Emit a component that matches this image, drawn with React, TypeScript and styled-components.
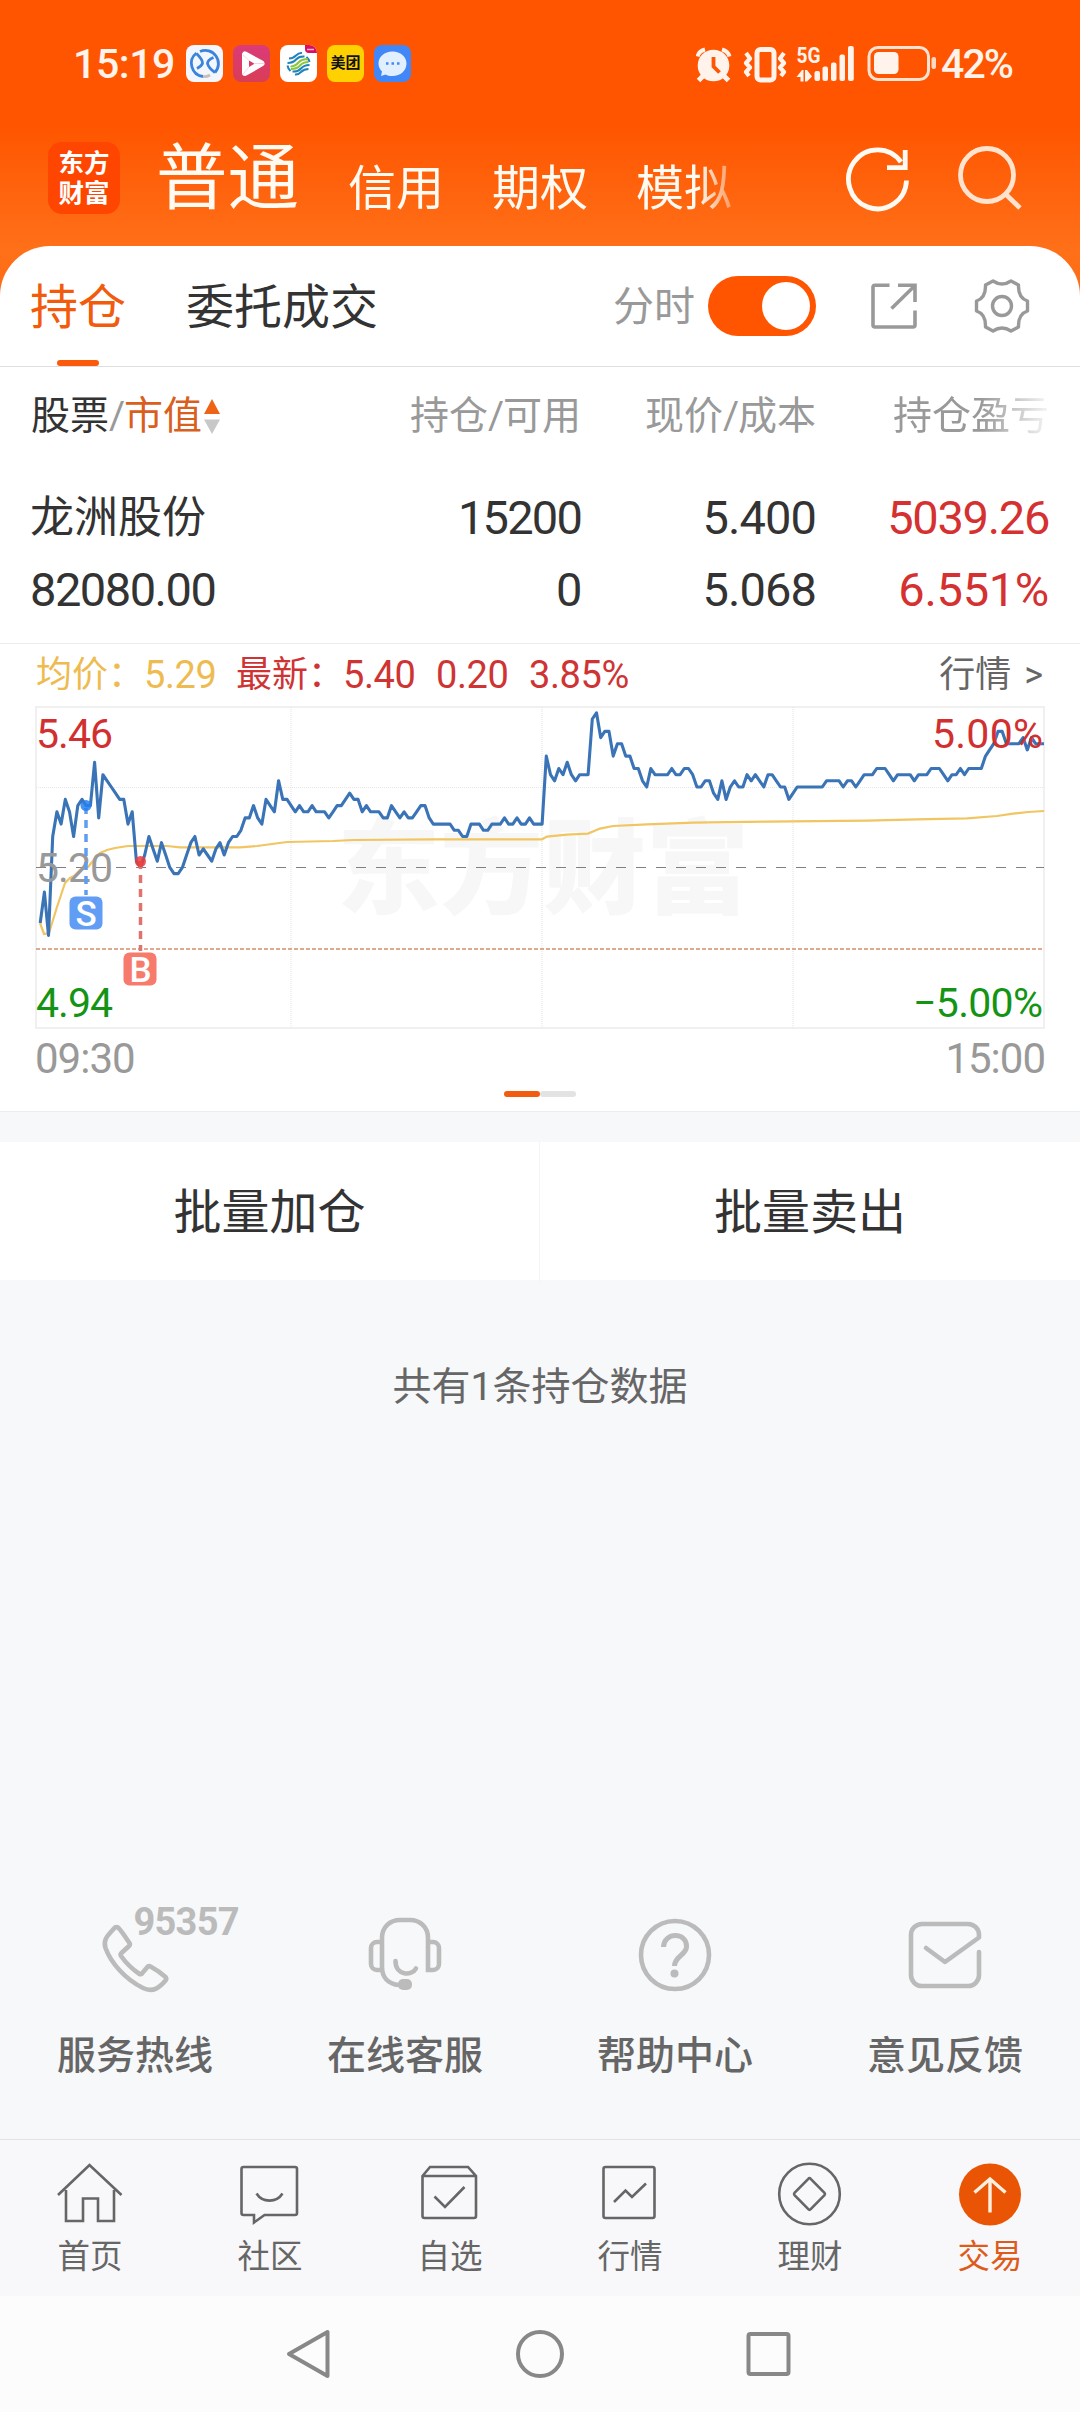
import React from 'react';
import styled, { createGlobalStyle } from 'styled-components';

const Global = createGlobalStyle`
  * { box-sizing: border-box; }
  body { margin: 0; background: #f7f8fa; }
  svg { display: block; flex: none; }
`;

const FONT = `Roboto, 'Noto Sans CJK SC', sans-serif`;

const Screen = styled.div`
  width: 1080px;
  height: 2412px;
  display: flex;
  flex-direction: column;
  overflow: hidden;
  font-family: ${FONT};
  color: #333;
  white-space: nowrap;
  background: linear-gradient(180deg, #ff5500 0, #ff5500 125px, #ff7019 250px, #ff6a14 310px, #f7f8fa 310px);
`;

/* ---------- status bar ---------- */

const StatusBar = styled.div`
  height: 127px;
  padding: 0 67px 0 73px;
  display: flex;
  align-items: center;
  color: #fff3ec;
`;

const Clock = styled.span`
  width: 113px;
  font-size: 41px;
  font-weight: 500;
  line-height: 48px;
  letter-spacing: -0.4px;
`;

const AppIcons = styled.div`
  display: flex;
  gap: 10px;
`;

const AppTile = styled.div<{ $bg: string }>`
  width: 37px;
  height: 37px;
  border-radius: 8px;
  overflow: hidden;
  display: flex;
  align-items: center;
  justify-content: center;
  background: ${(p) => p.$bg};
  color: #111;
  font-size: 15px;
  font-weight: 700;
  line-height: 37px;
`;

const StatusRight = styled.div`
  margin-left: auto;
  display: flex;
  align-items: center;
`;

const Percent = styled.span`
  margin-left: 5px;
  width: 72px;
  font-size: 41px;
  font-weight: 500;
  line-height: 48px;
  letter-spacing: -1.9px;
`;

/* ---------- app header ---------- */

const AppHeader = styled.header`
  height: 119px;
  padding: 0 54px 0 48px;
  display: flex;
  align-items: flex-start;
`;

const Logo = styled.div`
  width: 72px;
  height: 72px;
  margin-top: 15px;
  padding-top: 6px;
  border-radius: 14px;
  background: #ff4600;
  color: #fff;
  font-weight: 700;
  font-size: 25.5px;
  line-height: 30px;
  text-align: center;
`;

const Accounts = styled.nav`
  width: 680px;
  height: 119px;
  margin-left: 36px;
  display: flex;
  align-items: flex-start;
  gap: 48px;
  color: #fffaf2;
  mask-image: linear-gradient(90deg, #000 542px, rgba(0, 0, 0, 0.15) 587px);
`;

const Account = styled.span<{ $active?: boolean }>`
  padding-top: ${(p) => (p.$active ? 10 : 20)}px;
  font-size: ${(p) => (p.$active ? 71.5 : 48)}px;
  line-height: 84px;
  margin-right: ${(p) => (p.$active ? 1 : 0)}px;
`;

const HeaderIcons = styled.div`
  margin-left: auto;
  margin-top: 16px;
  display: flex;
  gap: 42px;
`;

/* ---------- panel ---------- */

const Panel = styled.section`
  height: 866px;
  border-radius: 50px 50px 0 0;
  border-bottom: 1px solid #ebedef;
  background: #fff;
`;

const TabBar = styled.div`
  height: 121px;
  padding: 0 50px 0 30px;
  border-bottom: 1px solid #dedede;
  display: flex;
  align-items: center;
`;

const Tab = styled.div<{ $active?: boolean }>`
  position: relative;
  height: 120px;
  margin-right: 60px;
  font-size: 48px;
  line-height: 123px;
  color: ${(p) => (p.$active ? '#f25a0c' : '#333')};
  &::after {
    content: '';
    display: ${(p) => (p.$active ? 'block' : 'none')};
    position: absolute;
    left: 27px;
    bottom: 0;
    width: 42px;
    height: 6px;
    border-radius: 3px;
    background: #fa5a0a;
  }
`;

const SwitchLabel = styled.span`
  margin-left: auto;
  margin-right: 13px;
  padding-top: 2px;
  font-size: 41px;
  line-height: 60px;
  color: #999;
`;

const Switch = styled.div`
  width: 108px;
  height: 60px;
  padding: 6px;
  border-radius: 30px;
  background: #ff5500;
  display: flex;
  justify-content: flex-end;
`;

const Knob = styled.div`
  width: 48px;
  height: 48px;
  border-radius: 50%;
  background: #fff;
`;

const TabIcons = styled.div`
  margin-left: 53px;
  display: flex;
  align-items: center;
  gap: 55px;
`;

const Columns = styled.div`
  display: grid;
  grid-template-columns: 350px 200px 235px 233px;
  padding: 0 31px;
`;

const ColumnHead = styled(Columns)`
  height: 96px;
  padding-top: 2px;
  align-items: center;
  font-size: 39px;
  line-height: 60px;
  color: #999;
`;

const HeadCell = styled.div<{ $faded?: boolean }>`
  display: flex;
  align-items: center;
  justify-content: flex-end;
  mask-image: ${(p) => (p.$faded ? 'linear-gradient(90deg, #000 165px, transparent 240px)' : 'none')};
`;

const SortCell = styled.div`
  display: flex;
  align-items: center;
`;

const Word = styled.span<{ $color: string }>`
  color: ${(p) => p.$color};
`;

const Slash = styled.span`
  width: 15px;
  text-align: center;
`;

const SortArrows = styled.svg`
  margin-left: 1px;
  margin-top: 1px;
`;

const Holding = styled(Columns)`
  height: 181px;
  padding-top: 18px;
  grid-auto-rows: 72px;
  border-bottom: 1px solid #ededed;
`;

const StockName = styled.div`
  margin-left: -1px;
  font-size: 44px;
  line-height: 75px;
`;

const Figure = styled.div<{ $left?: boolean; $red?: boolean; $tracking?: number }>`
  font-size: 47px;
  line-height: 74px;
  letter-spacing: ${(p) => p.$tracking ?? -1.5}px;
  margin-left: ${(p) => (p.$left ? -1 : 0)}px;
  text-align: ${(p) => (p.$left ? 'left' : 'right')};
  color: ${(p) => (p.$red ? '#d53131' : '#333')};
`;

const QuoteLine = styled.div`
  height: 61px;
  padding: 0 37px 0 36px;
  display: flex;
  align-items: center;
  font-size: 36px;
  line-height: 60px;
`;

const QuoteText = styled.span<{ $w: number; $color: string }>`
  width: ${(p) => p.$w}px;
  padding-top: 1px;
  color: ${(p) => p.$color};
`;

const QuoteNum = styled(QuoteText)`
  font-size: 38px;
  letter-spacing: -0.4px;
`;

const More = styled.span`
  margin-left: auto;
  padding-top: 1px;
  word-spacing: 4px;
  color: #666;
`;

const TimeAxis = styled.div`
  height: 46px;
  padding: 0 35px;
  display: flex;
  justify-content: space-between;
  font-size: 42px;
  line-height: 48px;
  letter-spacing: -1px;
  color: #999;
`;

const Pager = styled.div`
  margin-top: 10px;
  display: flex;
  justify-content: center;
`;

const PageMark = styled.div<{ $on?: boolean }>`
  width: 36px;
  height: 6px;
  border-radius: 3px;
  background: ${(p) => (p.$on ? '#f25c11' : '#e3e3e3')};
`;

/* ---------- batch actions ---------- */

const Actions = styled.div`
  height: 138px;
  margin-top: 30px;
  display: grid;
  grid-template-columns: 539px 541px;
  background: #fff;
`;

const Action = styled.div`
  text-align: center;
  font-size: 48px;
  line-height: 141px;
  & + & {
    border-left: 1px solid #f4f4f6;
  }
`;

const Summary = styled.div`
  margin-top: 76px;
  text-align: center;
  font-size: 39px;
  line-height: 62px;
  color: #666;
`;

/* ---------- services ---------- */

const Services = styled.div`
  margin-top: auto;
  height: 243px;
  display: grid;
  grid-template-columns: repeat(4, 1fr);
`;

const Service = styled.div`
  display: flex;
  flex-direction: column;
  align-items: center;
  font-size: 39px;
  font-weight: 500;
  line-height: 60px;
  color: #666;
`;

const ServiceArt = styled.svg`
  margin-bottom: 26px;
`;

/* ---------- bottom navigation ---------- */

const BottomNav = styled.nav`
  height: 157px;
  border-top: 1px solid #e2e3e5;
  background: #f8f8fa;
  display: grid;
  grid-template-columns: repeat(6, 1fr);
`;

const NavItem = styled.div<{ $active?: boolean }>`
  padding-top: 19px;
  display: flex;
  flex-direction: column;
  align-items: center;
  font-size: 32.5px;
  line-height: 40px;
  color: ${(p) => (p.$active ? '#dd5c1c' : '#666')};
`;

const NavArt = styled.svg`
  margin-bottom: 8px;
`;

const SystemBar = styled.div`
  height: 116px;
  background: #fcfcfc;
  display: flex;
  align-items: center;
  justify-content: center;
  gap: 180px;
`;

/* ---------- chart ---------- */

// Minute prices in cents for the whole session.
const PRICES = [
  511, 516, 509, 525, 529, 527, 531, 529, 525, 530, 531, 530, 530, 537, 528, 535, 534, 533, 532, 531,
  531, 527, 529, 521, 520, 522, 525, 523, 521, 524, 522, 520, 519, 519, 520, 522, 524, 525, 522, 523,
  522, 521, 523, 524, 522, 524, 525, 525, 526, 528, 528, 530, 528, 527, 531, 530, 529, 534, 531, 531,
  530, 529, 530, 529, 529, 530, 529, 529, 529, 528, 529, 530, 530, 531, 532, 531, 531, 529, 530, 529,
  529, 529, 528, 528, 530, 529, 528, 529, 528, 528, 529, 530, 530, 528, 527, 527, 527, 527, 527, 526,
  526, 525, 525, 527, 527, 527, 526, 526, 527, 527, 527, 528, 527, 527, 528, 527, 527, 528, 527, 527,
  527, 538, 535, 534, 536, 535, 537, 535, 534, 535, 535, 535, 544, 545, 541, 542, 542, 538, 540, 540,
  538, 538, 536, 536, 534, 533, 536, 535, 535, 535, 535, 536, 535, 535, 536, 536, 535, 533, 533, 534,
  534, 532, 531, 534, 531, 533, 534, 533, 533, 535, 534, 535, 534, 533, 535, 535, 534, 533, 533, 531,
  532, 533, 533, 533, 533, 533, 533, 533, 534, 534, 534, 534, 533, 534, 534, 533, 534, 535, 535, 535,
  536, 536, 536, 535, 534, 535, 535, 535, 535, 534, 535, 535, 535, 536, 536, 536, 535, 534, 535, 535,
  536, 535, 536, 536, 536, 536, 538, 539, 540, 542, 542, 540, 540, 540, 540, 541, 539, 541, 540, 540,
  540,
];

const pricePath = PRICES.map(
  (p, i) => `${i ? 'L' : 'M'}${(36 + (i + 1) * 4.1826).toFixed(1)} ${(867.4 - (p - 520) * 6.183).toFixed(1)}`,
).join('');

const AVG_PATH =
  'M40 923L44 934L49 933L53 920L57 907L61 895L65 883L70 878L74 876L80 870L88 867L93 861L100 853L107 850L115 848L128 846L167 846L180 847.3L240 847.3L257 846L287 842L333 841L353 840L433 839.4L542 839.3L547 836.6L567 834.6L588 833.6L600 828.6L613 826L647 824.4L693 822.7L767 821.6L867 820.6L917 819.4L967 818.3L997 816L1013 813.6L1028 812L1044 811';

function ChartLabel(p: { x: number; y: number; w: number; fill: string; end?: boolean; children: string }) {
  return (
    <text
      x={p.x}
      y={p.y}
      fill={p.fill}
      fontSize="41"
      textLength={p.w}
      textAnchor={p.end ? 'end' : 'start'}
    >
      {p.children}
    </text>
  );
}

function Chart() {
  return (
    <svg width="1080" height="330" viewBox="0 705 1080 330" fontFamily={FONT}>
      <text x="543" y="906" fontSize="103" fontWeight="900" textAnchor="middle" fill="#f7f7f7" fontFamily="'Noto Sans CJK SC', sans-serif">
        东方财富
      </text>
      <rect x="36" y="707" width="1008" height="321" fill="none" stroke="#f0f0f0" strokeWidth="2" />
      <path d="M291 707V1028M542 707V1028M793 707V1028M36 787.5H1044" stroke="#e6e6e6" strokeWidth="1.2" strokeDasharray="1 1" />
      <path d="M36 867.5H1044" stroke="#808080" strokeWidth="1.2" strokeDasharray="10 10" />
      <path d="M36 949H1044" stroke="#dda98f" strokeWidth="2" strokeDasharray="4 2" />
      <path d={AVG_PATH} fill="none" stroke="#f0c562" strokeWidth="2.2" />
      <path d={pricePath} fill="none" stroke="#3a74b6" strokeWidth="3.1" strokeLinejoin="round" />
      <ChartLabel x={36} y={748} w={77} fill="#d23030">5.46</ChartLabel>
      <ChartLabel x={36} y={881.5} w={77} fill="#999">5.20</ChartLabel>
      <ChartLabel x={36} y={1017} w={77} fill="#149414">4.94</ChartLabel>
      <ChartLabel x={1043} y={748} w={111} fill="#d23030" end>5.00%</ChartLabel>
      <ChartLabel x={1043} y={1017} w={130} fill="#149414" end>−5.00%</ChartLabel>
      <path d="M86 808V895" stroke="#5f9df0" strokeWidth="3.5" strokeDasharray="8 6" strokeDashoffset="2" />
      <circle cx="86" cy="805.5" r="5.5" fill="#2680ee" opacity=".85" />
      <rect x="69.5" y="896.5" width="33" height="33" rx="6" fill="#629df5" />
      <text x="86" y="925.5" fontSize="35" fontWeight="500" textAnchor="middle" fill="#fff">S</text>
      <path d="M140.5 861V951" stroke="#e0746c" strokeWidth="3.5" strokeDasharray="8 6" />
      <circle cx="140.5" cy="861.5" r="5.5" fill="#ee3b3b" opacity=".85" />
      <rect x="123.5" y="952.5" width="33" height="33" rx="6" fill="#f77b6c" />
      <text x="140.5" y="981.5" fontSize="35" fontWeight="500" textAnchor="middle" fill="#fff">B</text>
    </svg>
  );
}

/* ---------- status glyphs ---------- */

function StatusGlyphs() {
  return (
    <svg width="240" height="40" viewBox="695 43 240 40" fill="#fff3ec">
      <circle cx="712.500" cy="64.500" r="15.800" />
      <path d="M696.500 55.500Q698 50 704 48.500M721 48.500Q727 50 728.500 55.500" fill="none" stroke="#fff3ec" strokeWidth="4" />
      <path d="M702 75l-4.500 4.500M723 75l4.500 4.500" stroke="#fff3ec" strokeWidth="5" />
      <path d="M712.500 56v9.500l6 6" fill="none" stroke="#ff5500" strokeWidth="3.800" />
      <rect x="756" y="48.500" width="17" height="30.500" rx="3.500" fill="none" stroke="#fff3ec" strokeWidth="5" />
      <path d="M745 52l4 5.500-4 4.500 4 4.500-4 4.500 3 4M783 52l-4 5.500 4 4.500-4 4.500 4 4.500-3 4" fill="none" stroke="#fff3ec" strokeWidth="4.200" strokeLinejoin="round" />
      <text x="795.500" y="62" fontSize="22.500" fontWeight="700" fontFamily={FONT} textLength="24" lengthAdjust="spacingAndGlyphs">5G</text>
      <path d="M795.500 76l5.500-7h1.500v11.500h-3v-4.500zM804 69h2l5 6.500-5 5h-2z" />
      <rect x="813.500" y="70" width="5.500" height="10" rx="2" />
      <rect x="821.500" y="65.500" width="5.500" height="14.500" rx="2" />
      <rect x="830" y="61.500" width="5.500" height="18.500" rx="2" />
      <rect x="838.500" y="53.500" width="5.500" height="26.500" rx="2" />
      <rect x="847" y="45" width="5.800" height="35" rx="2" />
      <rect x="868" y="46.500" width="59.500" height="32" rx="9" fill="none" stroke="#ffe3d2" strokeWidth="3" />
      <rect x="873" y="51" width="24.500" height="22" rx="4.500" />
      <rect x="930.500" y="56" width="4.500" height="12" rx="2" fill="#ffd9c2" />
    </svg>
  );
}

function Status() {
  return (
    <StatusBar>
      <Clock>15:19</Clock>
      <AppIcons>
        <AppTile $bg="#f3f6fc">
          <svg width="37" height="37" viewBox="0 0 37 37" fill="none" stroke="#3b84dc" strokeWidth="2.800">
            <path d="M14 6.500A13.200 13.200 0 0 1 29 27.500" />
            <path d="M10.500 8A13.200 13.200 0 0 0 17 31.500" />
            <path d="M17 31.500Q21 32 24 30" stroke="#c9bfb8" />
            <path d="M10.500 8.500Q17 15 16.500 18.500Q15.500 21 11 23.500" />
            <path d="M27.500 12.500Q21.500 15 21.500 18.500Q22.500 23 29 27.500" />
          </svg>
        </AppTile>
        <AppTile $bg="linear-gradient(180deg, #db3b78, #d93d56)">
          <svg width="37" height="37" viewBox="0 0 37 37">
            <path d="M12 9.500v18.500L28.500 18.500z" fill="#fff" stroke="#fff" strokeWidth="6" strokeLinejoin="round" />
            <path d="M16 15.500v6.500l5.500-3.300z" fill="#d93c64" />
            <path d="M10 10L16 15.500M10 29L16 22M31 18.500H21.500" stroke="#f8d3df" strokeWidth="1" />
          </svg>
        </AppTile>
        <AppTile $bg="#fff">
          <svg width="37" height="37" viewBox="0 0 37 37" fill="none" strokeWidth="2">
            <path d="M25 0h12v8h-8a4 4 0 0 1-4-4z" fill="#d8105f" />
            <path d="M27 4.500h7" stroke="#f7b4cf" strokeWidth="1.500" />
            <g stroke="#1f83bd">
              <path d="M7.500 18Q13 18 16 14.500T24.500 11.500M9 13.500Q13 13.500 16 10.500T22 8M7.500 20.500Q8 24 10.500 26" />
              <path d="M29.500 20Q24 20 21 23.500T12.500 26.500M28.500 24Q24 24 21 27T15 29.500M29.500 17Q29 14 26.500 12" />
            </g>
            <path d="M10.500 21.500Q15 21.500 18.500 17.500T28 14.500M11 24Q17 24 20 20.500T28.500 17" stroke="#8cc63f" />
          </svg>
        </AppTile>
        <AppTile $bg="#ffd100">美团</AppTile>
        <AppTile $bg="#4187f7">
          <svg width="37" height="37" viewBox="0 0 37 37">
            <path d="M18.500 6.500c8 0 14 5 14 12s-6 12.500-14 12.500c-3 0-5-.5-7-1.500L7 31l1-4.500C6 24.500 4.500 22 4.500 18.500c0-7 6-12 14-12z" fill="#e2efff" />
            <path d="M12 18.500h2.500M17.500 18.500h2.500M23 18.500h2.500" stroke="#4187f7" strokeWidth="2.600" />
          </svg>
        </AppTile>
      </AppIcons>
      <StatusRight>
        <StatusGlyphs />
        <Percent>42%</Percent>
      </StatusRight>
    </StatusBar>
  );
}

const SERVICES = [
  {
    label: '服务热线',
    art: (
      <>
        <path d="M49 32.500 C50.500 30.500 52.500 30.500 54 32.500 C58 37 61 42 64.500 47 Q65.500 48.500 64 50 L56.500 57 Q55 58.500 56 60 C61 67 67 73 74.500 78 Q76 78.500 77 77.500 L82 71.500 Q83.500 69.500 85.500 70.500 C91 73.500 96 77 100.500 81 Q102 83 100.500 84.500 C95 91 88.500 97 78 92 C60 83 46 67 40.500 52 C37.500 43 44 38.500 49 32.500Z" />
        <text x="68.500" y="38.500" fontSize="38" fontWeight="700" fill="#bbb" stroke="none" textLength="106">95357</text>
      </>
    ),
  },
  {
    label: '在线客服',
    art: (
      <>
        <path d="M47 74H42a6 6 0 0 1-6-6V52a6 6 0 0 1 6-6H47M93 46H98a6 6 0 0 1 6 6V68a6 6 0 0 1-6 6H93V42C93 31 85 24 75 24H65C55 24 47 31 47 42V71C47 81 53 88 64 89" />
        <path d="M60.500 65C60.500 80 77 80 81 72.500" strokeLinecap="round" />
        <rect x="63" y="83" width="14" height="11" rx="5" fill="#bbb" stroke="none" />
      </>
    ),
  },
  {
    label: '帮助中心',
    art: (
      <>
        <circle cx="70" cy="59" r="34" />
        <path d="M58.500 51C59 35.500 82.500 36 81.500 51C81 59 69.500 60.500 69.500 70" strokeWidth="5" />
        <circle cx="69.500" cy="77.500" r="4" fill="#bbb" stroke="none" />
      </>
    ),
  },
  {
    label: '意见反馈',
    art: (
      <path
        d="M104 56V79a11 11 0 0 1-11 11H47a11 11 0 0 1-11-11V39a11 11 0 0 1 11-11H93a11 11 0 0 1 11 11V41.500L70 66L51 52"
        strokeLinecap="round"
        strokeLinejoin="round"
      />
    ),
  },
];

const NAV = [
  {
    label: '首页',
    art: <path d="M3 36L34.500 6L66.500 36M11 31V62H28V39.500H43V62H59V31" />,
  },
  {
    label: '社区',
    art: (
      <>
        <path d="M8.500 8H60a2 2 0 0 1 2 2V54a2 2 0 0 1-2 2H29.500L19 63.500V56H8.500a2 2 0 0 1-2-2V10a2 2 0 0 1 2-2Z" />
        <path d="M21.500 34.500C27.500 44 41.500 44 47.500 34.500" />
      </>
    ),
  },
  {
    label: '自选',
    art: (
      <>
        <path d="M7.500 17L15 8H53L61 17V57a2 2 0 0 1-2 2H9.500a2 2 0 0 1-2-2ZM7.500 17H61" />
        <path d="M19.500 37.500L30 48L49.500 28" />
      </>
    ),
  },
  {
    label: '行情',
    art: (
      <>
        <rect x="8.500" y="8" width="51" height="51" rx="2" />
        <path d="M19 43L30.500 31.500L37 38L51 24.500" />
      </>
    ),
  },
  {
    label: '理财',
    art: (
      <>
        <circle cx="34.500" cy="35" r="30.300" />
        <path d="M33.300 19.800Q34.500 18.500 35.700 19.800L49.500 33.800Q50.500 35 49.500 36.200L35.700 50.200Q34.500 51.500 33.300 50.200L19.500 36.200Q18.500 35 19.500 33.800Z" />
      </>
    ),
  },
  {
    label: '交易',
    active: true,
    art: (
      <>
        <circle cx="35" cy="35.500" r="31" fill="#e95504" stroke="none" />
        <path d="M35 53.500V21M19.500 33.500L35 20L50.500 33.500" stroke="#fff0df" strokeWidth="3.400" />
      </>
    ),
  },
];

export default function App() {
  return (
    <Screen>
      <Global />
      <Status />
      <AppHeader>
        <Logo>
          东方
          <br />
          财富
        </Logo>
        <Accounts>
          <Account $active>普通</Account>
          <Account>信用</Account>
          <Account>期权</Account>
          <Account>模拟</Account>
        </Accounts>
        <HeaderIcons>
          <svg width="70" height="74" viewBox="842 143 70 74" fill="none" stroke="#fffaf2" strokeWidth="4.800">
            <path d="M904.500 180.500A29 29.500 0 1 1 899 162" />
            <path d="M903.200 150V167.700H885" />
          </svg>
          <svg width="70" height="74" viewBox="954 143 70 74" fill="none" stroke="#ffe3cf" strokeWidth="4.800">
            <circle cx="985" cy="175" r="26.500" />
            <path d="M1003.500 194L1018 208" />
          </svg>
        </HeaderIcons>
      </AppHeader>

      <Panel>
        <TabBar>
          <Tab $active>持仓</Tab>
          <Tab>委托成交</Tab>
          <SwitchLabel>分时</SwitchLabel>
          <Switch>
            <Knob />
          </Switch>
          <TabIcons>
            <svg width="50" height="50" viewBox="869 281 50 50" fill="none" stroke="#999" strokeWidth="3.600">
              <path d="M889.500 285.300H875a2 2 0 0 0-2 2V325a2 2 0 0 0 2 2H913a2 2 0 0 0 2-2V310.500" />
              <path d="M898 285.300H915V302M914 286.500L891.500 308.500" />
            </svg>
            <svg width="56" height="56" viewBox="-28 -28 56 56" fill="none" stroke="#999" strokeWidth="3.400" strokeLinejoin="round">
              <path d="M-9 -25Q0 -19 9 -25L16.500 -21Q16 -8 25.500 -5V5Q16 8 16.500 21L9 25Q0 19 -9 25L-16.500 21Q-16 8 -25.500 5V-5Q-16 -8 -16.500 -21Z" />
              <circle r="9.500" />
            </svg>
          </TabIcons>
        </TabBar>

        <ColumnHead>
          <SortCell>
            <Word $color="#333">股票</Word>
            <Slash>/</Slash>
            <Word $color="#d95f1e">市值</Word>
            <SortArrows width="18" height="36" viewBox="0 0 18 36">
              <path d="M9 0L17 15H1Z" fill="#ee6316" />
              <path d="M9 35L1 20.500H17Z" fill="#c8c8c8" />
            </SortArrows>
          </SortCell>
          <HeadCell>
            持仓<Slash>/</Slash>可用
          </HeadCell>
          <HeadCell>
            现价<Slash>/</Slash>成本
          </HeadCell>
          <HeadCell $faded>持仓盈亏</HeadCell>
        </ColumnHead>

        <Holding>
          <StockName>龙洲股份</StockName>
          <Figure $tracking={-1.8}>15200</Figure>
          <Figure $tracking={-0.9}>5.400</Figure>
          <Figure $red $tracking={-1.3}>5039.26</Figure>
          <Figure $left>82080.00</Figure>
          <Figure>0</Figure>
          <Figure $tracking={-0.9}>5.068</Figure>
          <Figure $red $tracking={-0.3}>6.551%</Figure>
        </Holding>

        <QuoteLine>
          <QuoteText $w={108} $color="#eebb50">均价：</QuoteText>
          <QuoteNum $w={92} $color="#eebb50">5.29</QuoteNum>
          <QuoteText $w={107} $color="#cf3434">最新：</QuoteText>
          <QuoteNum $w={93} $color="#cf3434">5.40</QuoteNum>
          <QuoteNum $w={93} $color="#cf3434">0.20</QuoteNum>
          <QuoteNum $w={110} $color="#cf3434">3.85%</QuoteNum>
          <More>行情 &gt;</More>
        </QuoteLine>

        <Chart />

        <TimeAxis>
          <span>09:30</span>
          <span>15:00</span>
        </TimeAxis>
        <Pager>
          <PageMark $on />
          <PageMark />
        </Pager>
      </Panel>

      <Actions>
        <Action>批量加仓</Action>
        <Action>批量卖出</Action>
      </Actions>
      <Summary>共有1条持仓数据</Summary>

      <Services>
        {SERVICES.map((s) => (
          <Service key={s.label}>
            <ServiceArt width="210" height="104" viewBox="-35 0 210 104" fill="none" stroke="#bbb" strokeWidth="4.600" fontFamily={FONT}>
              {s.art}
            </ServiceArt>
            {s.label}
          </Service>
        ))}
      </Services>

      <BottomNav>
        {NAV.map((n) => (
          <NavItem key={n.label} $active={n.active}>
            <NavArt width="70" height="70" viewBox="0 0 70 70" fill="none" stroke="#666" strokeWidth="2.600">
              {n.art}
            </NavArt>
            {n.label}
          </NavItem>
        ))}
      </BottomNav>

      <SystemBar>
        <svg width="50" height="50" viewBox="0 0 50 50" fill="none" stroke="#888" strokeWidth="4" strokeLinejoin="round">
          <path d="M42.500 3V47L4 25Z" />
        </svg>
        <svg width="50" height="50" viewBox="0 0 50 50" fill="none" stroke="#888" strokeWidth="4">
          <circle cx="25" cy="25" r="22" />
        </svg>
        <svg width="50" height="50" viewBox="0 0 50 50" fill="none" stroke="#888" strokeWidth="4">
          <rect x="3.500" y="5" width="40" height="40" rx="2" />
        </svg>
      </SystemBar>
    </Screen>
  );
}
